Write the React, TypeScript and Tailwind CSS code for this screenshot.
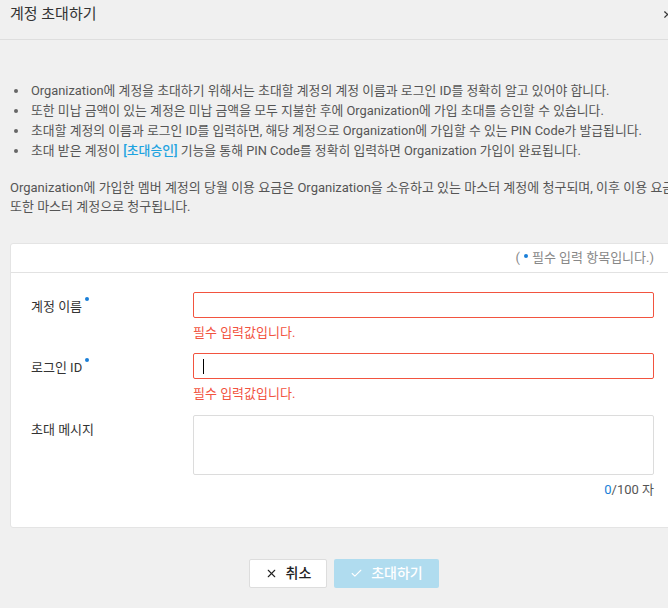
import React from "react";
import { X, Check } from "lucide-react";

const font = {
  fontFamily: 'Roboto, "Noto Sans CJK KR", "Noto Sans", sans-serif',
};

const notices = [
  <>Organization에 계정을 초대하기 위해서는 초대할 계정의 계정 이름과 로그인 ID를 정확히 알고 있어야 합니다.</>,
  <>또한 미납 금액이 있는 계정은 미납 금액을 모두 지불한 후에 Organization에 가입 초대를 승인할 수 있습니다.</>,
  <>초대할 계정의 이름과 로그인 ID를 입력하면, 해당 계정으로 Organization에 가입할 수 있는 PIN Code가 발급됩니다.</>,
  <>
    초대 받은 계정이 <span className="text-[#1ea3e0] font-medium">[초대승인]</span> 기능을 통해 PIN Code를 정확히 입력하면 Organization 가입이 완료됩니다.
  </>,
];

const RequiredDot = () => (
  <span className="inline-block w-[4px] h-[4px] rounded-full bg-[#1a7fd8] align-top ml-[3px] mt-[5px]" />
);

interface FieldRowProps {
  label: string;
  required?: boolean;
  error?: string;
  focused?: boolean;
}

const FieldRow = ({ label, required, error, focused }: FieldRowProps) => (
  <div className="flex">
    <div className="w-[162px] shrink-0 h-[26px] leading-[30px] text-[13px] text-[#333]">
      {label}
      {required && <RequiredDot />}
    </div>
    <div className="flex-1">
      <div className="h-[26px] border border-[#f2533f] rounded-[2px] bg-white flex items-center px-[9px]">
        {focused && <span className="w-px h-[15px] bg-black" />}
      </div>
      {error && (
        <div className="mt-[6px] h-[18px] leading-[18px] text-[13px] text-[#f2533f]">
          {error}
        </div>
      )}
    </div>
  </div>
);

export default function App() {
  return (
    <div className="w-[668px] h-[608px] overflow-hidden bg-[#f0f0f0]" style={font}>
      <div className="w-[688px]">
        <div className="h-[40px] flex items-center justify-between pl-[10px] pr-[15px] border-b border-[#dedede]">
          <span className="text-[15px] text-[#333] -mt-[10px]">계정 초대하기</span>
          <X size={11} strokeWidth={2.5} className="text-[#333] -mt-[10px]" />
        </div>

        <div className="px-[10px] pt-[41px]">
          <ul className="text-[12.85px] text-[#555]">
            {notices.map((n, i) => (
              <li key={i} className="flex h-[20px] leading-[20px]">
                <span className="w-[21px] shrink-0 flex items-center pl-[4px]">
                  <span className="w-[4px] h-[4px] rounded-full bg-[#666]" />
                </span>
                <span className="whitespace-nowrap">{n}</span>
              </li>
            ))}
          </ul>

          <p className="mt-[17px] text-[13px] leading-[19px] text-[#555]">
            Organization에 가입한 멤버 계정의 당월 이용 요금은 Organization을 소유하고 있는 마스터 계정에 청구되며, 이후 이용 요금 또한 마스터 계정으로 청구됩니다.
          </p>

          <div className="mt-[27px] bg-white border border-[#e4e4e4] rounded-[3px]">
            <div className="h-[29px] border-b border-[#e2e2e2] flex items-center justify-end pr-[23px] text-[13px] text-[#888]">
              ( <span className="inline-block w-[4px] h-[4px] rounded-full bg-[#1a7fd8] mx-[4px] -mt-[4px]" />필수 입력 항목입니다.)
            </div>
            <div className="pl-[20px] pr-[23px] pt-[19px] pb-[28px] flex flex-col">
              <FieldRow label="계정 이름" required error="필수 입력값입니다." />
              <div className="h-[11px]" />
              <FieldRow label="로그인 ID" required error="필수 입력값입니다." focused />
              <div className="h-[12px]" />
              <div className="flex">
                <div className="w-[162px] shrink-0 h-[26px] leading-[30px] text-[13px] text-[#333]">
                  초대 메시지
                </div>
                <div className="flex-1">
                  <div className="h-[60px] border border-[#dcdcdc] rounded-[2px] bg-white" />
                  <div className="mt-[6px] h-[18px] leading-[18px] text-right text-[13px] text-[#555]">
                    <span className="text-[#1a7fd8]">0</span>/100 자
                  </div>
                </div>
              </div>
            </div>
          </div>

          <div className="mt-[31px] flex justify-center gap-[7px]">
            <button className="w-[78px] h-[29px] bg-white border border-[#dddddd] rounded-[2px] flex items-center justify-center gap-[8px] text-[14px] font-medium text-[#222]">
              <X size={13} strokeWidth={2} />
              취소
            </button>
            <button className="w-[105px] h-[29px] bg-[#b0dcef] rounded-[2px] flex items-center justify-center gap-[8px] text-[14px] font-medium text-white">
              <Check size={13} strokeWidth={2} />
              초대하기
            </button>
          </div>
        </div>
      </div>
    </div>
  );
}
